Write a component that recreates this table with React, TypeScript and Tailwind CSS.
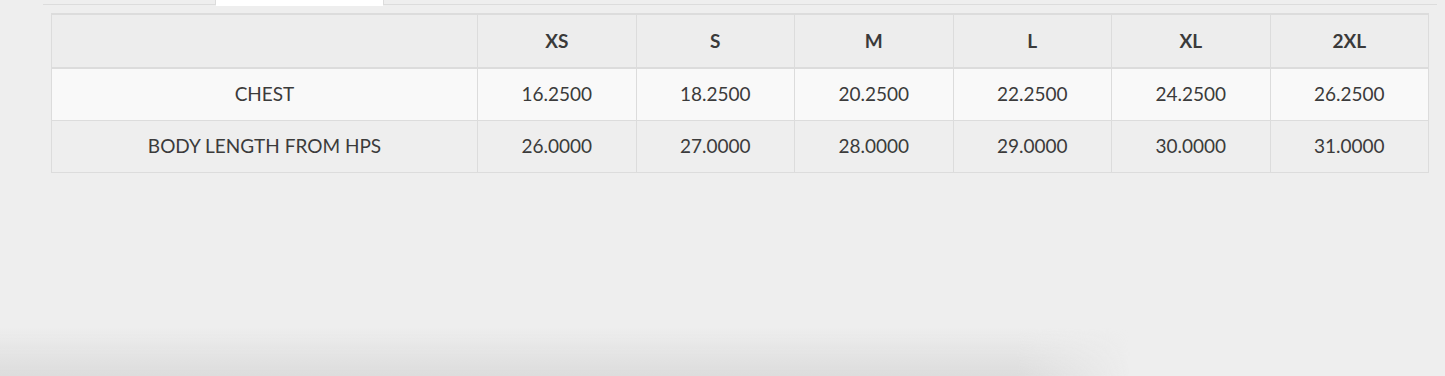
const sizes = ["XS", "S", "M", "L", "XL", "2XL"];

const rows = [
  { label: "CHEST", values: ["16.2500", "18.2500", "20.2500", "22.2500", "24.2500", "26.2500"] },
  { label: "BODY LENGTH FROM HPS", values: ["26.0000", "27.0000", "28.0000", "29.0000", "30.0000", "31.0000"] },
];

export default function App() {
  return (
    <div className="h-[376px] flex flex-col bg-[#eeeeee] font-['Lato','Liberation_Sans',sans-serif] text-[#3b3b3b] overflow-hidden">
      <div className="ml-[43px] w-[1394px]">
        {/* Tabs (bottom edge only visible) */}
        <div className="flex h-[6px]">
          <div className="w-[173px] h-[5px] border-r border-b border-[#dcdcdc]" />
          <div className="w-[167px] h-[6px] bg-white" />
          <div className="flex-1 h-[5px] border-l border-b border-[#dcdcdc]" />
        </div>

        {/* Size chart */}
        <div className="px-2 pt-[7px]">
          <table className="w-[1378px] border-collapse table-fixed text-[19px]">
            <colgroup>
              <col className="w-[426px]" />
              {sizes.map((s) => (
                <col key={s} />
              ))}
            </colgroup>
            <thead>
              <tr className="h-[54px] bg-[#ededed] border-t-2 border-b-2 border-[#dcdcdc]">
                <th className="border-x border-[#dcdcdc]" />
                {sizes.map((s) => (
                  <th key={s} className="border-x border-[#dcdcdc] font-bold text-[#3a3a3a]">
                    {s}
                  </th>
                ))}
              </tr>
            </thead>
            <tbody>
              {rows.map((r, i) => (
                <tr key={r.label} className={i % 2 === 0 ? "h-[52px] bg-[#f9f9f9]" : "h-[52px] bg-[#eeeeee]"}>
                  <td className="border border-[#dcdcdc] text-center">{r.label}</td>
                  {r.values.map((v, j) => (
                    <td key={j} className="border border-[#dcdcdc] text-center">
                      {v}
                    </td>
                  ))}
                </tr>
              ))}
            </tbody>
          </table>
        </div>
      </div>

      {/* Shadow of the panel below */}
      <div className="mt-auto w-[1130px] h-[48px] bg-gradient-to-b from-transparent to-[#dcdcdc] [mask-image:linear-gradient(to_right,black_90%,transparent)]" />
    </div>
  );
}
